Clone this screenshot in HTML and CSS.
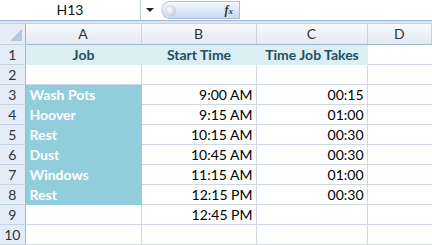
FILE: index.html
```html
<!DOCTYPE html>
<html lang="en">
<head>
  <meta charset="UTF-8" />
  <title>Sheet</title>
  <link rel="stylesheet" href="styles.css">
</head>
<body>
  <div class="formula-bar">
    <div class="name-box">H13</div>
    <div class="name-drop"><span class="arrow"></span></div>
    <div class="fx-pill">
      <span class="knob"></span>
      <span class="fx">f<small>x</small></span>
    </div>
    <div class="formula-input"></div>
  </div>
  <div class="bar-gap"></div>

  <table class="sheet">
    <colgroup>
      <col class="c-row" />
      <col class="c-a" />
      <col class="c-b" />
      <col class="c-c" />
      <col class="c-d" />
    </colgroup>
    <tr class="col-heads">
      <th class="corner"><span class="tri"></span></th>
      <th>A</th><th>B</th><th>C</th><th>D</th>
    </tr>
    <tr class="title-row">
      <th>1</th>
      <td class="t">Job</td><td class="t">Start Time</td><td class="t">Time Job Takes</td><td></td>
    </tr>
    <tr><th>2</th><td></td><td></td><td></td><td></td></tr>
    <tr><th>3</th><td class="job">Wash Pots</td><td class="num">9:00 AM</td><td class="num">00:15</td><td></td></tr>
    <tr><th>4</th><td class="job">Hoover</td><td class="num">9:15 AM</td><td class="num">01:00</td><td></td></tr>
    <tr><th>5</th><td class="job">Rest</td><td class="num">10:15 AM</td><td class="num">00:30</td><td></td></tr>
    <tr><th>6</th><td class="job">Dust</td><td class="num">10:45 AM</td><td class="num">00:30</td><td></td></tr>
    <tr><th>7</th><td class="job">Windows</td><td class="num">11:15 AM</td><td class="num">01:00</td><td></td></tr>
    <tr><th>8</th><td class="job">Rest</td><td class="num">12:15 PM</td><td class="num">00:30</td><td></td></tr>
    <tr><th>9</th><td></td><td class="num">12:45 PM</td><td></td><td></td></tr>
    <tr><th>10</th><td></td><td></td><td></td><td></td></tr>
  </table>
</body>
</html>
```

FILE: styles.css
```css
body {
  margin: 0;
  padding: 0;
  background: #fff;
  font-family: Lato, "Open Sans", sans-serif;
  font-size: 14px;
  color: #000;
  overflow: hidden;
}

.formula-bar {
  display: flex;
  height: 20px;
  background: #fff;
}

.name-box {
  width: 140px;
  line-height: 20px;
  text-align: center;
  border-right: 1px solid #c3cfde;
  color: #111;
}

.name-drop {
  width: 18px;
  display: flex;
  align-items: center;
  justify-content: center;
}

.arrow {
  width: 0;
  height: 0;
  border-left: 4px solid transparent;
  border-right: 4px solid transparent;
  border-top: 4px solid #222;
}

.fx-pill {
  width: 79px;
  height: 18px;
  margin-top: 1px;
  margin-left: 2px;
  display: flex;
  align-items: center;
  justify-content: space-between;
  border: 1px solid #a9bdd6;
  border-left-color: #c7d3e2;
  border-radius: 10px 0 0 10px;
  background: linear-gradient(#f6f9fd, #dbe6f4 55%, #cbdaee);
  box-sizing: border-box;
}

.knob {
  width: 11px;
  height: 11px;
  margin-left: 3px;
  border-radius: 50%;
  background: radial-gradient(circle at 40% 40%, #ffffff, #c9ced6 70%, #aab2bd);
}

.fx {
  font-family: "Liberation Serif", serif;
  font-style: italic;
  font-weight: bold;
  font-size: 12px;
  color: #333;
  margin-right: 6px;
}

.fx small {
  font-size: 9px;
}

.formula-input {
  flex: 1;
}

.bar-gap {
  height: 4px;
  border-top: 1px solid #9fb4cf;
  border-bottom: 1px solid #c5d3e3;
  background: #dbe5f1;
  box-sizing: border-box;
}

.sheet {
  border-collapse: collapse;
  table-layout: fixed;
  width: 100%;
}

.c-row { width: 25px; }
.c-a { width: 116px; }
.c-b { width: 115px; }
.c-c { width: 111px; }

.sheet th,
.sheet td {
  height: 20px;
  padding: 0;
  box-sizing: border-box;
  white-space: nowrap;
  overflow: hidden;
}

.sheet td {
  border: 1px solid #d0d7e5;
  padding: 0 3px 0 4px;
}

.sheet td:last-child {
  border-right: 0;
}

.col-heads th {
  font-weight: normal;
  color: #333;
  text-align: center;
  background: linear-gradient(#f7f9fc, #e3e9f2);
  border-right: 1px solid #c5d2e1;
  border-bottom: 1px solid #9eb6ce;
}

.sheet tr th:first-child {
  font-weight: normal;
  color: #333;
  text-align: center;
  background: #e4ecf7;
  border-right: 1px solid #9eb6ce;
  border-bottom: 1px solid #c5d2e1;
}

.col-heads th.corner {
  background: #e4ecf7;
  position: relative;
}

.tri {
  position: absolute;
  right: 3px;
  bottom: 3px;
  width: 0;
  height: 0;
  border-left: 12px solid transparent;
  border-bottom: 12px solid #b8c8dc;
}

.title-row td.t {
  background: #daeef3;
  color: #21505f;
  font-weight: bold;
  text-align: center;
  border-color: #daeef3;
}

.job {
  background: #92cddc;
  color: #fff;
  font-weight: bold;
  border-color: #92cddc !important;
}

.num {
  text-align: right;
}
```
